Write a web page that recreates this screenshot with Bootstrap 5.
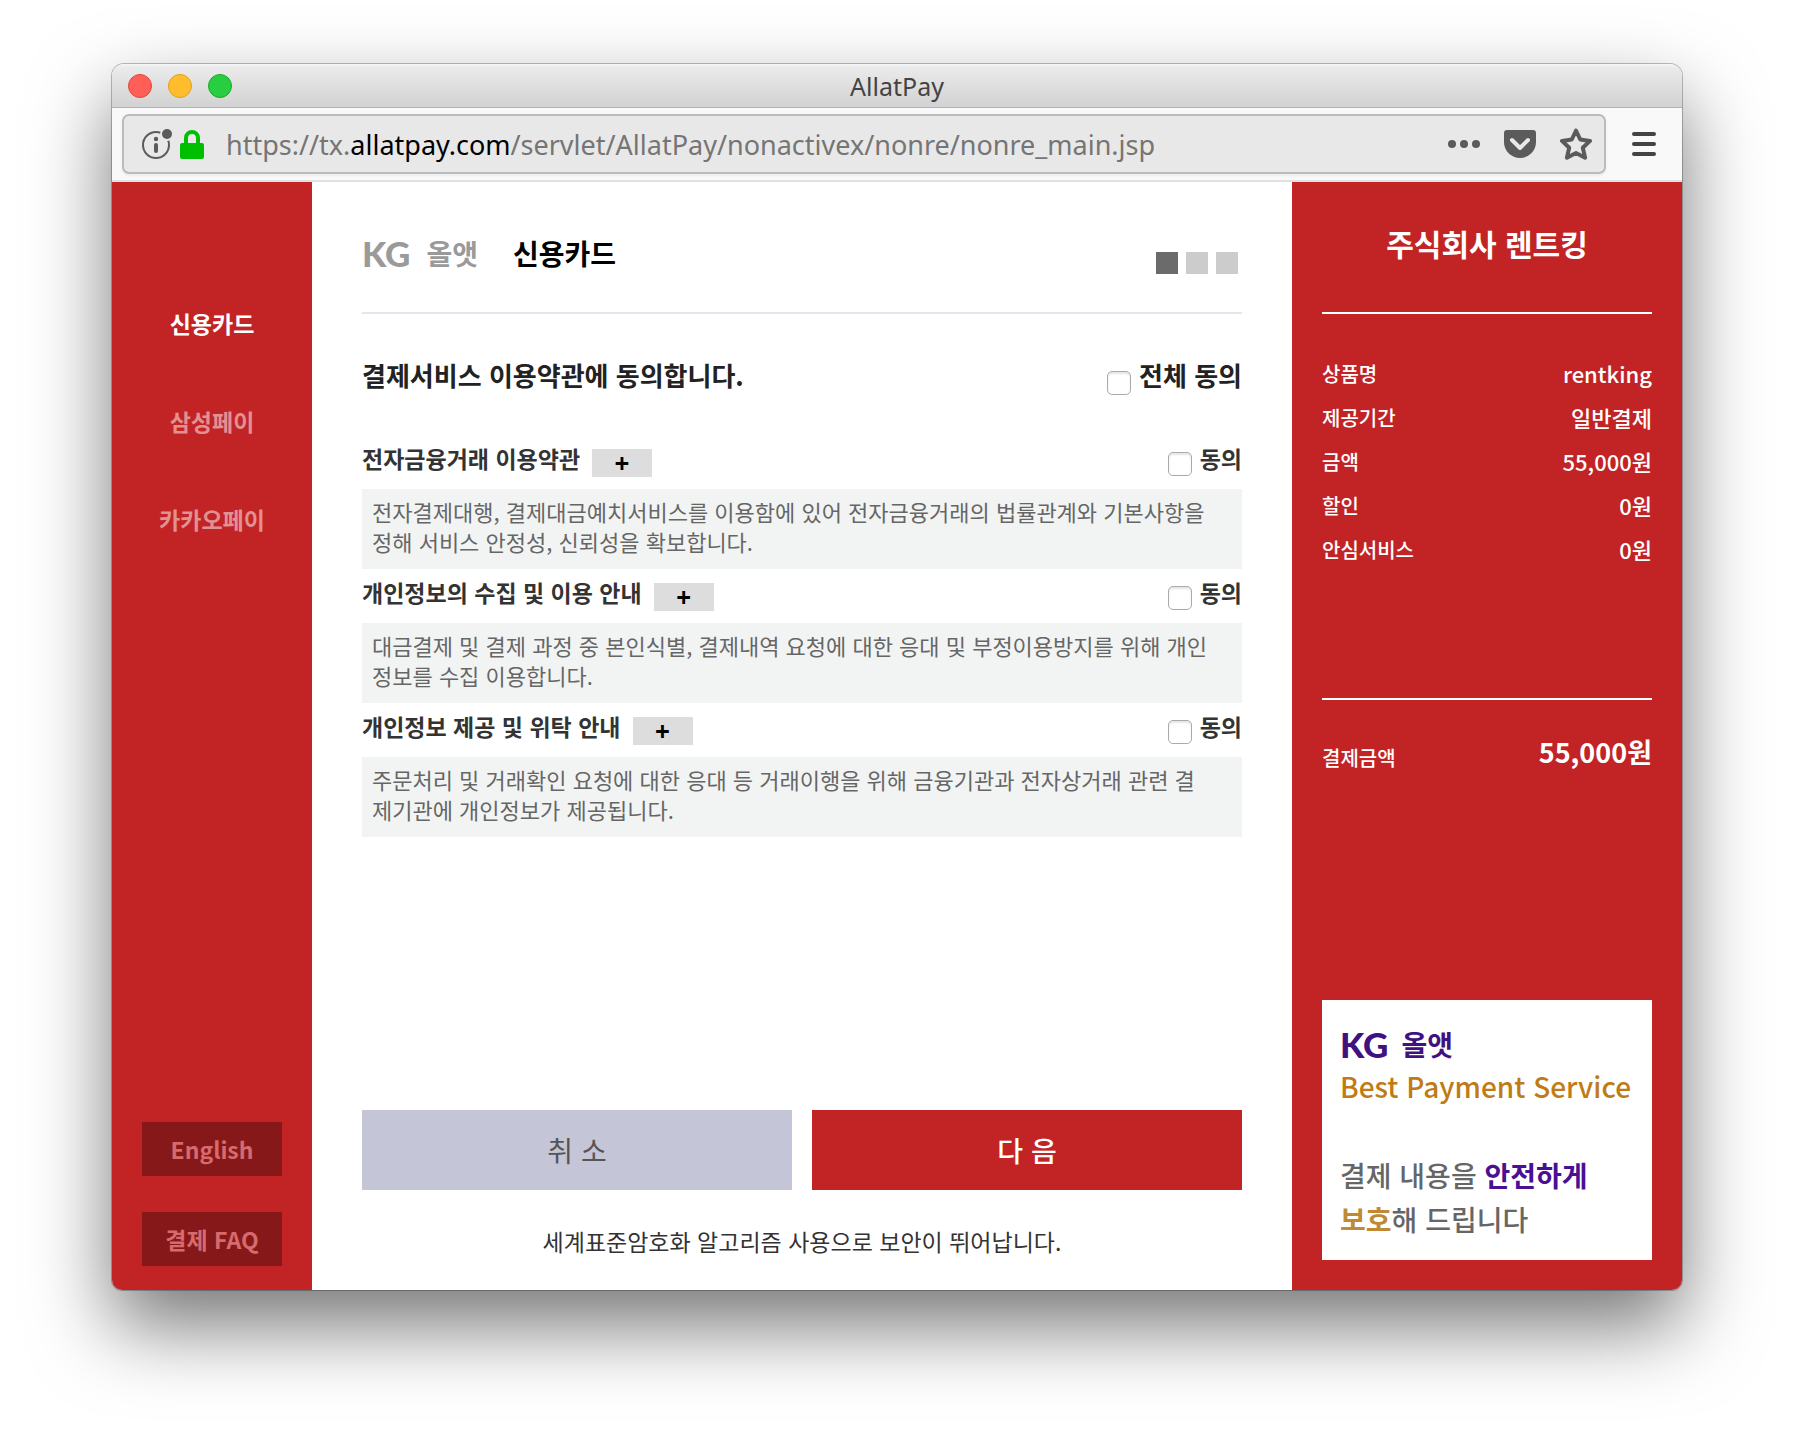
<!DOCTYPE html>
<html lang="ko">
<head>
<meta charset="utf-8">
<meta name="viewport" content="width=device-width, initial-scale=1">
<title>AllatPay</title>
<link href="https://cdn.jsdelivr.net/npm/bootstrap@5.3.0/dist/css/bootstrap.min.css" rel="stylesheet">
<style>
:root { --brand: #c22426; --brand-dark: #87181a; --ko: "Noto Sans CJK KR", "Noto Sans", sans-serif; }
body { background: #fff; padding: 64px 112px 160px; font-family: var(--ko); font-size: 23px; line-height: 30px; color: #333; }
.window { min-height: calc(100vh - 224px); border-radius: 12px 12px 10px 10px; box-shadow: 0 0 0 1px rgba(0,0,0,.25), 0 36px 80px rgba(0,0,0,.54); background: #fff; }
.titlebar { height: 44px; padding: 0 16px; border-radius: 12px 12px 0 0; background: linear-gradient(#f6f6f6 0, #ebebeb 3px, #d2d2d2 100%); border-bottom: 1px solid #b1b1b1; }
.titlebar h1 { font: 25px/44px "Noto Sans", sans-serif; color: #444; margin: 0; }
.lamps { flex: 1 0 0; gap: 16px; }
.lamp { width: 24px; height: 24px; padding: 0; border: 1px solid; border-radius: 50%; }
.lamp-close { background: #ff5f57; border-color: #e2463f; }
.lamp-min { background: #ffbd2e; border-color: #e1a116; }
.lamp-max { background: #28cd41; border-color: #12ac28; }
.toolbar { height: 74px; padding: 0 26px 0 10px; gap: 26px; background: #f9f9f9; border-bottom: 2px solid #e1e1e1; }
.urlbox { height: 60px; padding: 0 12px 0 16px; background: #e8e8e8; border: 2px solid #bbb; border-radius: 7px; min-width: 0; box-shadow: 0 2px 3px rgba(0,0,0,.05); }
.urltext { font: 27px/56px "Noto Sans", sans-serif; color: #757575; margin-left: 21px; padding-top: 2px; }
.urltext b { font-weight: 400; color: #000; }
.tool { background: none; border: 0; padding: 0; line-height: 0; color: #5b5b5b; }
.lock { margin-left: 5px; }
.tools { gap: 24px; }
.side { width: 200px; background: var(--brand); padding: 126px 30px 24px; border-bottom-left-radius: 10px; }
.side .nav { gap: 68px; }
.side .nav-link { padding: 0; color: #e29192; font-weight: 700; text-align: center; white-space: nowrap; }
.side .nav-link.active { color: #fff; }
.side-links { gap: 36px; }
.side-btn { height: 54px; line-height: 54px; background: var(--brand-dark); color: #d66a6d; font-weight: 700; text-align: center; text-decoration: none; }
.pane { padding: 0 50px 34px; min-width: 0; }
.pane-head { height: 132px; border-bottom: 2px solid #e3e7ed; padding: 12px 4px 0 0; }
.kg-logo { gap: 16px; font-weight: 700; font-size: 28px; }
.kg-logo .latin { font-family: Lato, sans-serif; font-weight: 900; font-size: 35px; }
.kg-gray { color: #9a9a9a; }
.pane-title { font-size: 28px; font-weight: 700; color: #000; margin: 0 0 0 35px; line-height: 30px; }
.steps { gap: 8px; padding-top: 20px; }
.step { width: 22px; height: 22px; background: #ccc; }
.step-on { background: #6b6b6b; }
.agree-all { padding: 46px 0 40px; font-size: 26px; font-weight: 700; color: #222; }
.agree-all h2 { font-size: 26px; font-weight: 700; line-height: 30px; margin: 0; }
.tick { appearance: none; width: 24px; height: 24px; margin: 11px 0 0; border: 1px solid #aaa; border-radius: 5px; background: #fff; box-shadow: inset 0 2px 2px rgba(0,0,0,.1); }
.tick:checked { background: #555; }
.term-head { height: 54px; padding-top: 8px; font-weight: 700; }
.term-head h3 { font-size: 23px; font-weight: 700; line-height: 30px; margin: 0 12px 0 0; }
.term-head .tick { margin-top: 9px; }
.more { width: 60px; height: 28px; margin-top: 6px; padding: 0; border: 0; background: #ddd; color: #000; font: 700 26px/28px "Noto Sans", sans-serif; }
.term-text { margin: 0; padding: 7px 30px 13px 10px; background: #f2f4f4; color: #666; font-size: 22px; }
.actions { gap: 20px; margin-bottom: 36px; }
.actions .btn { height: 80px; border-radius: 0; border: 0; font-size: 28px; }
.btn-cancel, .btn-cancel:hover { background: #c4c6d8; color: #555; }
.btn-next, .btn-next:hover { background: var(--brand); color: #fff; font-weight: 500; }
.summary { width: 390px; background: var(--brand); color: #fff; padding: 0 30px 30px; border-bottom-right-radius: 10px; }
.summary h2 { height: 132px; line-height: 122px; font-size: 30px; font-weight: 700; text-align: center; margin: 0; border-bottom: 2px solid #fff; }
.bill { height: 386px; padding-top: 38px; margin: 0; border-bottom: 2px solid #fff; }
.bill-row { height: 44px; line-height: 44px; font-weight: 500; }
.bill-row dt { font-size: 20px; font-weight: 500; }
.bill-row dd { font-size: 22px; line-height: 42px; margin: 0; }
.total { margin: 31px 0 0; }
.total dt { padding-top: 5px; }
.total dd { font-size: 27px; font-weight: 700; }
.promo { height: 260px; background: #fff; padding: 26px 18px; color: #666; font-size: 28px; line-height: 44px; font-weight: 500; white-space: nowrap; }
.kg-purple { color: #3f1280; line-height: 36px; gap: 13px; }
.promo p { margin: 0; }
.promo .slogan { color: #c07b15; padding-top: 2px; margin-bottom: 45px; }
.promo .safe { color: #4b0f94; font-weight: 700; }
.promo .keep { color: #c08a35; font-weight: 700; }
</style>
<script src="https://cdn.jsdelivr.net/npm/bootstrap@5.3.0/dist/js/bootstrap.bundle.min.js"></script>
</head>
<body>
<div class="window d-flex flex-column">
  <header class="titlebar d-flex align-items-center">
    <div class="lamps d-flex">
      <button class="lamp lamp-close" aria-label="닫기"></button>
      <button class="lamp lamp-min" aria-label="최소화"></button>
      <button class="lamp lamp-max" aria-label="확대"></button>
    </div>
    <h1>AllatPay</h1>
    <div class="lamps"></div>
  </header>
  <div class="toolbar d-flex align-items-center">
    <div class="urlbox d-flex align-items-center flex-grow-1">
      <button class="tool" aria-label="사이트 정보"><svg width="34" height="34" viewBox="0 0 34 34"><circle cx="16" cy="18" r="13" fill="none" stroke="#5b5b5b" stroke-width="2"/><circle cx="27" cy="7" r="7" fill="#e8e8e8"/><circle cx="27" cy="7" r="5" fill="#5b5b5b"/><circle cx="16" cy="12" r="2.200" fill="#5b5b5b"/><rect x="14" y="16" width="4" height="10" rx="2" fill="#5b5b5b"/></svg></button>
      <button class="tool lock" aria-label="보안 연결"><svg width="26" height="34" viewBox="0 0 26 34"><rect x="1" y="16" width="24" height="16" rx="2" fill="#00bf00"/><path d="M7 17v-6a6 6 0 0 1 12 0v6" fill="none" stroke="#00bf00" stroke-width="4"/></svg></button>
      <div class="urltext flex-grow-1 text-nowrap overflow-hidden" role="textbox" contenteditable="true" spellcheck="false" aria-label="주소">https://tx.<b>allatpay.com</b>/servlet/AllatPay/nonactivex/nonre/nonre_main.jsp</div>
      <div class="tools d-flex align-items-center">
        <button class="tool" aria-label="페이지 작업"><svg width="32" height="32" viewBox="0 0 32 32" fill="currentColor"><circle cx="4" cy="16" r="4"/><circle cx="16" cy="16" r="4"/><circle cx="28" cy="16" r="4"/></svg></button>
        <button class="tool" aria-label="포켓"><svg width="32" height="32" viewBox="0 0 32 32"><path d="M3 2h26a3 3 0 0 1 3 3v9a16 16 0 0 1-32 0V5a3 3 0 0 1 3-3z" fill="currentColor"/><path d="M8 12l8 8 8-8" fill="none" stroke="#e8e8e8" stroke-width="4" stroke-linecap="round" stroke-linejoin="round"/></svg></button>
        <button class="tool" aria-label="북마크"><svg width="32" height="32" viewBox="0 0 32 32"><path d="M16 2.500l4.200 9 9.800 1.400-7.200 6.800 2.300 10L16 25l-9.100 4.700 2.300-10L2 12.900l9.800-1.400z" fill="none" stroke="currentColor" stroke-width="4" stroke-linejoin="round"/></svg></button>
      </div>
    </div>
    <button class="tool" aria-label="메뉴"><svg width="24" height="24" viewBox="0 0 24 24" stroke="#444" stroke-width="4" stroke-linecap="round"><path d="M2 2h20M2 12h20M2 22h20"/></svg></button>
  </div>
  <div class="d-flex flex-grow-1">
    <aside class="side d-flex flex-column justify-content-between flex-shrink-0">
      <nav class="nav flex-column">
        <a class="nav-link active" href="#card">신용카드</a>
        <a class="nav-link" href="#samsung">삼성페이</a>
        <a class="nav-link" href="#kakao">카카오페이</a>
      </nav>
      <div class="side-links d-flex flex-column">
        <a class="side-btn" href="#english">English</a>
        <a class="side-btn" href="#faq">결제 FAQ</a>
      </div>
    </aside>
    <main class="pane d-flex flex-column flex-grow-1">
      <div class="pane-head d-flex align-items-center">
        <div class="kg-logo kg-gray d-flex align-items-center"><span class="latin">KG</span><span>올앳</span></div>
        <h2 class="pane-title">신용카드</h2>
        <div class="steps d-flex ms-auto"><span class="step step-on"></span><span class="step"></span><span class="step"></span></div>
      </div>
      <div class="agree-all d-flex justify-content-between">
        <h2>결제서비스 이용약관에 동의합니다.</h2>
        <div class="d-flex gap-2"><input class="tick" type="checkbox" id="all"><label for="all">전체 동의</label></div>
      </div>
      <section>
        <div class="term-head d-flex">
          <h3>전자금융거래 이용약관</h3><button class="more" type="button">+</button>
          <div class="d-flex gap-2 ms-auto"><input class="tick" type="checkbox" id="t1"><label for="t1">동의</label></div>
        </div>
        <p class="term-text">전자결제대행, 결제대금예치서비스를 이용함에 있어 전자금융거래의 법률관계와 기본사항을 정해 서비스 안정성, 신뢰성을 확보합니다.</p>
      </section>
      <section>
        <div class="term-head d-flex">
          <h3>개인정보의 수집 및 이용 안내</h3><button class="more" type="button">+</button>
          <div class="d-flex gap-2 ms-auto"><input class="tick" type="checkbox" id="t2"><label for="t2">동의</label></div>
        </div>
        <p class="term-text">대금결제 및 결제 과정 중 본인식별, 결제내역 요청에 대한 응대 및 부정이용방지를 위해 개인정보를 수집 이용합니다.</p>
      </section>
      <section>
        <div class="term-head d-flex">
          <h3>개인정보 제공 및 위탁 안내</h3><button class="more" type="button">+</button>
          <div class="d-flex gap-2 ms-auto"><input class="tick" type="checkbox" id="t3"><label for="t3">동의</label></div>
        </div>
        <p class="term-text">주문처리 및 거래확인 요청에 대한 응대 등 거래이행을 위해 금융기관과 전자상거래 관련 결제기관에 개인정보가 제공됩니다.</p>
      </section>
      <div class="actions d-flex mt-auto">
        <button class="btn btn-cancel flex-fill w-50" type="button">취 소</button>
        <button class="btn btn-next flex-fill w-50" type="button">다 음</button>
      </div>
      <p class="text-center m-0">세계표준암호화 알고리즘 사용으로 보안이 뛰어납니다.</p>
    </main>
    <aside class="summary d-flex flex-column flex-shrink-0">
      <h2>주식회사 렌트킹</h2>
      <dl class="bill">
        <div class="bill-row d-flex justify-content-between"><dt>상품명</dt><dd>rentking</dd></div>
        <div class="bill-row d-flex justify-content-between"><dt>제공기간</dt><dd>일반결제</dd></div>
        <div class="bill-row d-flex justify-content-between"><dt>금액</dt><dd>55,000원</dd></div>
        <div class="bill-row d-flex justify-content-between"><dt>할인</dt><dd>0원</dd></div>
        <div class="bill-row d-flex justify-content-between"><dt>안심서비스</dt><dd>0원</dd></div>
      </dl>
      <dl class="bill-row total d-flex justify-content-between"><dt>결제금액</dt><dd>55,000원</dd></dl>
      <div class="promo mt-auto">
        <div class="kg-logo kg-purple d-flex align-items-center"><span class="latin">KG</span><span>올앳</span></div>
        <p class="slogan">Best Payment Service</p>
        <p>결제 내용을 <span class="safe">안전하게</span></p>
        <p><span class="keep">보호</span>해 드립니다</p>
      </div>
    </aside>
  </div>
</div>
</body>
</html>
